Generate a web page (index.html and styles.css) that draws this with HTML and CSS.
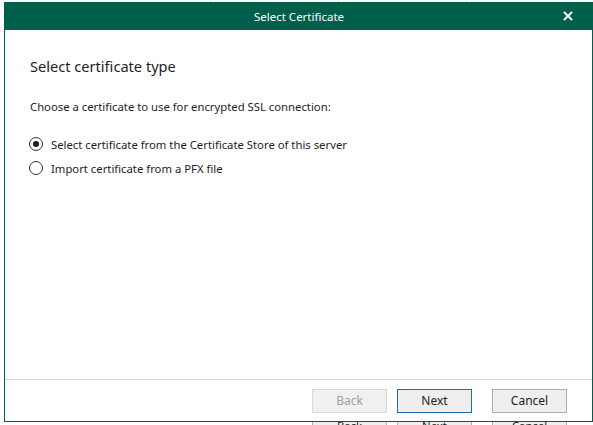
FILE: index.html
```html
<!DOCTYPE html>
<html lang="en">
<head>
    <meta charset="UTF-8">
    <title>Select Certificate</title>
    <link rel="stylesheet" href="styles.css">
</head>
<body>
    <div class="backdrop-top">
        <span></span><span></span><span></span>
    </div>
    <div class="window">
        <div class="titlebar">
            <span class="title">Select Certificate</span>
            <span class="close">
                <svg width="10" height="10" viewBox="0 0 10 10">
                    <path d="M1 1 L9 9 M9 1 L1 9" stroke="#fff" stroke-width="2"/>
                </svg>
            </span>
        </div>
        <div class="content">
            <h1>Select certificate type</h1>
            <p class="prompt">Choose a certificate to use for encrypted SSL connection:</p>
            <label class="radio">
                <span class="radio-box checked"></span>
                Select certificate from the Certificate Store of this server
            </label>
            <label class="radio">
                <span class="radio-box"></span>
                Import certificate from a PFX file
            </label>
        </div>
        <div class="footer">
            <button class="btn disabled">Back</button>
            <button class="btn default">Next</button>
            <button class="btn cancel">Cancel</button>
        </div>
    </div>
    <div class="backdrop-bottom">
        <div class="ghost-row">
            <span class="ghost">Back</span>
            <span class="ghost">Next</span>
            <span class="ghost cancel">Cancel</span>
        </div>
    </div>
</body>
</html>
```

FILE: styles.css
```css
body {
    margin: 0;
    background-color: #ffffff;
    font-family: "Noto Sans", "Open Sans", sans-serif;
    font-size: 11.3px;
    color: #1e1e1e;
    width: 593px;
    height: 425px;
    overflow: hidden;
}

.backdrop-top {
    height: 2px;
    display: flex;
    padding-left: 210px;
    gap: 127px;
}

.backdrop-top span {
    width: 1px;
    height: 2px;
    background: #e3e3e3;
}

.window {
    margin-left: 4px;
    width: 587px;
    height: 419px;
    border: 1px solid #005f4b;
    border-top: none;
    border-right-width: 2px;
    display: flex;
    flex-direction: column;
}

.titlebar {
    height: 28px;
    margin-left: -1px;
    margin-right: -2px;
    background-color: #005f4b;
    color: #ffffff;
    position: relative;
    display: flex;
    align-items: center;
    justify-content: center;
}

.title {
    font-size: 11.5px;
}

.close {
    position: absolute;
    right: 21px;
    top: 9px;
    width: 10px;
    height: 10px;
}

.close svg {
    display: block;
}

.content {
    flex: 1;
    padding: 25px 25px 0 25px;
}

.content h1 {
    font-size: 14.6px;
    font-weight: normal;
    margin: 0;
    line-height: 22px;
    color: #1e1e1e;
}

.prompt {
    margin: 22px 0 0 0;
    line-height: 16px;
}

.radio {
    display: flex;
    align-items: center;
    gap: 8px;
    height: 24px;
    margin-left: -1px;
}

.radio:first-of-type {
    margin-top: 17px;
}

.radio-box {
    width: 12px;
    height: 12px;
    border: 1px solid #333333;
    border-radius: 50%;
    background: #ffffff;
    position: relative;
    flex-shrink: 0;
}

.radio-box.checked::after {
    content: "";
    position: absolute;
    left: 3px;
    top: 3px;
    width: 6px;
    height: 6px;
    border-radius: 50%;
    background: #1e1e1e;
}

.footer {
    height: 41px;
    border-top: 1px solid #d9d9d9;
    display: flex;
    align-items: center;
    justify-content: flex-end;
    padding-right: 25px;
}

.btn {
    width: 75px;
    height: 24px;
    font-family: inherit;
    font-size: 12px;
    background-color: #efefef;
    border: 1px solid #adadad;
    color: #1e1e1e;
    padding: 0;
    margin-left: 10px;
}

.btn.disabled {
    color: #a0a0a0;
    border-color: #d9d9d9;
    background-color: #f0f0f0;
}

.btn.default {
    border-color: #1f6bb3;
}

.btn.cancel {
    margin-left: 20px;
}

.backdrop-bottom {
    height: 3px;
    overflow: hidden;
}

.ghost-row {
    display: flex;
    padding-left: 312px;
    margin-top: -2px;
}

.ghost {
    width: 73px;
    height: 22px;
    border: 1px solid #adadad;
    background: #efefef;
    text-align: center;
    line-height: 10px;
    margin-right: 10px;
}

.ghost.cancel {
    margin-left: 10px;
}
```
